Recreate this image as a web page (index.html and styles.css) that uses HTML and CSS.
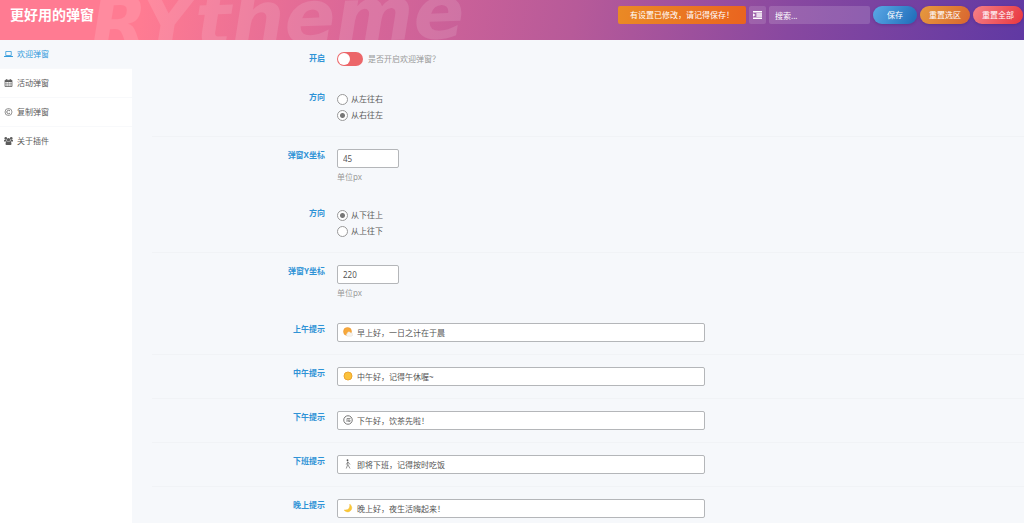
FILE: index.html
```html
<!DOCTYPE html>
<html lang="zh-CN">
<head>
<meta charset="utf-8">
<title>更好用的弹窗</title>
<link rel="stylesheet" href="styles.css">
</head>
<body>
<header class="header">
  <span class="watermark" aria-hidden="true">RYtheme</span>
  <h1 class="title">更好用的弹窗</h1>
  <div class="tools">
    <div class="notice">有设置已修改，请记得保存！</div>
    <button class="expand" type="button" aria-label="展开全部">
      <svg viewBox="0 0 16 14" width="9" height="8"><path d="M0 0h16v2.600H0zM6 3.800h10v2.600H6zM6 7.600h10v2.600H6zM0 11.400h16V14H0zM0 3.800l4.500 3.200L0 10.200z" fill="#fff"/></svg>
    </button>
    <input class="search" type="text" placeholder="搜索..." aria-label="搜索">
    <button class="btn btn-save" type="button">保存</button>
    <button class="btn btn-section" type="button">重置选区</button>
    <button class="btn btn-all" type="button">重置全部</button>
  </div>
</header>
<div class="body">
  <nav class="nav">
    <a class="nav-item active" href="#welcome">
      <svg class="nav-icon" viewBox="0 0 18 16"><path d="M3.500 3h11v8h-11z" fill="none" stroke="currentColor" stroke-width="1.600"/><path d="M0 12h18v1.200q0 1-1.500 1h-15Q0 14.200 0 13.200z" fill="currentColor"/></svg>
      欢迎弹窗</a>
    <a class="nav-item" href="#activity">
      <svg class="nav-icon" viewBox="0 0 18 16"><path d="M2 2.500h14V15H2z" fill="none" stroke="currentColor" stroke-width="1.500"/><path d="M2 2.500h14V6H2zM4.500 0h2v4h-2zM11.500 0h2v4h-2z" fill="currentColor"/><path d="M2 9h14M2 12h14M5.500 6v9M9 6v9M12.500 6v9" stroke="currentColor" stroke-width=".7"/></svg>
      活动弹窗</a>
    <a class="nav-item" href="#copy">
      <svg class="nav-icon" viewBox="0 0 18 16"><circle cx="9" cy="8" r="7" fill="none" stroke="currentColor" stroke-width="1.300"/><path d="M12 6A3.500 3.500 0 1 0 12 10" fill="none" stroke="currentColor" stroke-width="1.600"/></svg>
      复制弹窗</a>
    <a class="nav-item" href="#about">
      <svg class="nav-icon" viewBox="0 0 18 16"><g fill="currentColor"><circle cx="3.500" cy="2.800" r="2.600"/><circle cx="14.500" cy="2.800" r="2.600"/><circle cx="9" cy="5.500" r="3.400"/><path d="M0 9V6.500q1-1.500 4.500-.800Q5 8 6 9zM18 9V6.500q-1-1.500-4.500-.800Q13 8 12 9zM3 14q0-5.500 3-5.500 3 1.600 6 0 3 0 3 5.500 0 2-2 2H5q-2 0-2-2z"/></g></svg>
      关于插件</a>
  </nav>
  <main class="content">
    <div class="row switch-row">
      <label class="label" for="enable">开启</label>
      <div class="field switch-line">
        <input class="switch" id="enable" type="checkbox">
        <span class="hint">是否开启欢迎弹窗？</span>
      </div>
    </div>
    <div class="row" role="radiogroup" aria-labelledby="dx">
      <span class="label" id="dx">方向</span>
      <div class="field radios">
        <label class="radio"><input type="radio" name="dirx">从左往右</label>
        <label class="radio"><input type="radio" name="dirx" checked>从右往左</label>
      </div>
    </div>
    <div class="row plain">
      <label class="label" for="px">弹窗X坐标</label>
      <div class="field">
        <input class="box small" id="px" type="text" value="45">
        <p class="desc">单位px</p>
      </div>
    </div>
    <div class="row" role="radiogroup" aria-labelledby="dy">
      <span class="label" id="dy">方向</span>
      <div class="field radios">
        <label class="radio"><input type="radio" name="diry" checked>从下往上</label>
        <label class="radio"><input type="radio" name="diry">从上往下</label>
      </div>
    </div>
    <div class="row plain">
      <label class="label" for="py">弹窗Y坐标</label>
      <div class="field">
        <input class="box small" id="py" type="text" value="220">
        <p class="desc">单位px</p>
      </div>
    </div>
    <div class="row">
      <label class="label" for="t1">上午提示</label>
      <div class="field">
        <input class="box wide" id="t1" type="text" value="早上好，一日之计在于晨">
        <svg class="emoji" viewBox="0 0 20 20"><circle cx="9" cy="9" r="8" fill="#f7a93b" stroke="#e8912d"/><path d="M9 18.500a3.200 3.200 0 0 1-.500-6 3.500 3.500 0 0 1 6.500-1 3.500 3.500 0 0 1 1.500 7z" fill="#f8f4ee" stroke="#ddd3c8" stroke-width=".7"/></svg>
      </div>
    </div>
    <div class="row">
      <label class="label" for="t2">中午提示</label>
      <div class="field">
        <input class="box wide" id="t2" type="text" value="中午好，记得午休喔~">
        <svg class="emoji" viewBox="0 0 20 20"><circle cx="10" cy="10" r="8" fill="#fbc23c" stroke="#eda52f" stroke-width="2"/></svg>
      </div>
    </div>
    <div class="row">
      <label class="label" for="t3">下午提示</label>
      <div class="field">
        <input class="box wide" id="t3" type="text" value="下午好，饮茶先啦！">
        <svg class="emoji" viewBox="0 0 20 20"><circle cx="10" cy="10" r="8.500" fill="#fff" stroke="#777" stroke-width="2"/><path d="M15 7H8v7M10 10h4v3h-3z" fill="none" stroke="#777" stroke-width="1.600"/></svg>
      </div>
    </div>
    <div class="row">
      <label class="label" for="t4">下班提示</label>
      <div class="field">
        <input class="box wide" id="t4" type="text" value="即将下班，记得按时吃饭">
        <svg class="emoji" viewBox="0 0 20 20"><circle cx="9" cy="2.500" r="1.800" fill="#555"/><path d="M9.500 5v6l4.500 8M9.500 11l-3 8M9.500 6L6.500 11M10 6l4 5" fill="none" stroke="#777" stroke-width="1.600"/></svg>
      </div>
    </div>
    <div class="row">
      <label class="label" for="t5">晚上提示</label>
      <div class="field">
        <input class="box wide" id="t5" type="text" value="晚上好，夜生活嗨起来！">
        <svg class="emoji" viewBox="0 0 20 20"><path d="M13.500 2Q21 9 15 15.500 8.500 21 2 14q8 1 10.500-4Q14 6 13.500 2z" fill="#fbc936" stroke="#f0b52a" stroke-width=".7"/></svg>
      </div>
    </div>
  </main>
</div>
</body>
</html>
```
FILE: styles.css
```css
* { box-sizing: border-box; }
html, body { height: 100%; }
body {
  margin: 0;
  display: flex;
  flex-direction: column;
  overflow: hidden;
  background: #f6f8fb;
  color: #5c5c5c;
  font-family: "Noto Sans", "Noto Sans CJK SC", sans-serif;
  font-size: 8px;
  line-height: 12px;
}
input, button { font: inherit; margin: 0; }

.header {
  position: relative;
  flex: none;
  display: flex;
  justify-content: space-between;
  align-items: flex-start;
  height: 40px;
  padding: 6px 1px 0 10px;
  overflow: hidden;
  background: linear-gradient(100deg, #ff7b92 0%, #ff7b92 14%, #d96698 35%, #b75a99 56%, #8848a0 77%, #6039a3 100%);
}
.watermark {
  position: absolute;
  left: 90px;
  top: -22px;
  color: rgba(255, 255, 255, 0.12);
  font: italic bold 75px/80px "DejaVu Sans", sans-serif;
  transform: rotate(-2deg);
  pointer-events: none;
}
.title {
  position: relative;
  margin: 0;
  color: #fff;
  font-size: 14px;
  line-height: 18px;
  font-weight: 700;
}
.tools { position: relative; display: flex; gap: 3px; color: #fff; }
.notice {
  width: 128px;
  border-radius: 2px;
  background: linear-gradient(100deg, #ea8a25, #ea641f);
  line-height: 18px;
  padding-left: 12px;
  white-space: nowrap;
}
.expand {
  display: flex;
  align-items: center;
  justify-content: center;
  width: 17px;
  height: 18px;
  padding: 0;
  border: 0;
  border-radius: 2px;
  background: rgba(255, 255, 255, 0.13);
}
.search {
  width: 101px;
  height: 18px;
  padding: 0 6px;
  border: 0;
  border-radius: 2px;
  background: rgba(255, 255, 255, 0.15);
  color: #fff;
}
.search::placeholder { color: #fff; opacity: 1; }
.btn {
  width: 50px;
  height: 18px;
  padding: 0;
  border: 0;
  border-radius: 9px;
  color: #fff;
  box-shadow: 0 1px 3px rgba(40, 20, 80, 0.25);
}
.btn-save { width: 44px; background: linear-gradient(120deg, #5ba9e6, #1e6bb8); }
.btn-section { background: linear-gradient(120deg, #e69a3e, #d9652f); }
.btn-all { background: linear-gradient(120deg, #f58088, #e8363e); }

.body { flex: 1; display: flex; min-height: 0; }
.nav { flex: none; width: 132px; background: #fff; }
.nav-item {
  display: flex;
  align-items: center;
  gap: 4px;
  height: 29px;
  padding-left: 4px;
  border-bottom: 1px solid #f8f9fb;
  color: #5c5c5c;
  text-decoration: none;
}
.nav-item:last-child { border-bottom-color: transparent; }
.nav-item.active { background: #f6f8fb; color: #349bdc; }
.nav-icon { width: 9px; height: 8px; }

.content { flex: 1; min-width: 0; padding-left: 20px; }
.row {
  display: grid;
  grid-template-columns: 173px 1fr;
  column-gap: 12px;
  padding: 12px 0;
  border-bottom: 1px solid #f1f3f6;
}
.switch-row, .plain { border-bottom-color: transparent; }
.label { color: #2f93d6; font-weight: 700; text-align: right; }
.field { position: relative; }
.switch-line { display: flex; align-items: center; gap: 5px; }
.switch {
  appearance: none;
  width: 26px;
  height: 14px;
  padding: 1px;
  border-radius: 7px;
  background: #ec6669;
}
.switch::before {
  content: "";
  display: block;
  width: 12px;
  height: 12px;
  border-radius: 50%;
  background: #fff;
}
.switch:checked { background: #4fb07a; }
.switch:checked::before { margin-left: 12px; }
.hint, .desc { color: #999; }
.radios { margin-bottom: 1px; }
.radio { display: flex; align-items: center; gap: 3px; height: 16px; }
.radio input {
  appearance: none;
  width: 11px;
  height: 11px;
  border: 1px solid #999;
  border-radius: 50%;
  background: #fff;
}
.radio input:checked { background: radial-gradient(circle, #777 0 2px, #fff 3px); }
.box {
  display: block;
  height: 19px;
  padding: 0 5px;
  border: 1px solid #b4b6b9;
  border-radius: 2px;
  background: #fff;
  color: #555;
}
.small { width: 62px; }
.wide { width: 100%; max-width: 368px; padding-left: 19px; }
.desc { margin: 3px 0 0; line-height: 11px; }
.emoji { position: absolute; left: 6px; top: 4px; width: 10px; height: 10px; }
```
